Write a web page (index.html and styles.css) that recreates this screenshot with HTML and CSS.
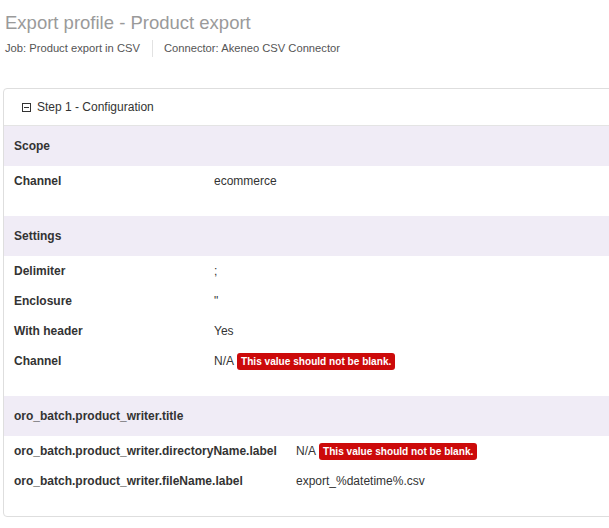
FILE: index.html
```html
<!DOCTYPE html>
<html lang="en">
<head>
<meta charset="utf-8">
<title>Export profile - Product export</title>
<link rel="stylesheet" href="styles.css">
</head>
<body>
<div class="page">
  <h1 class="title">Export profile - Product export</h1>
  <div class="meta">
    <span>Job: Product export in CSV</span>
    <span class="sep"></span>
    <span>Connector: Akeneo CSV Connector</span>
  </div>
  <div class="panel">
    <div class="panel-head">
      <svg class="toggle" width="9" height="9" viewBox="0 0 9 9"><rect x="0.5" y="0.5" width="8" height="8" fill="none" stroke="#333" stroke-width="1"/><line x1="2" y1="4.5" x2="7" y2="4.5" stroke="#333" stroke-width="1"/></svg>
      <span>Step 1 - Configuration</span>
    </div>

    <section class="group">
      <div class="group-title">Scope</div>
      <div class="rows">
        <div class="label">Channel</div><div class="value">ecommerce</div>
      </div>
    </section>

    <section class="group">
      <div class="group-title">Settings</div>
      <div class="rows">
        <div class="label">Delimiter</div><div class="value">;</div>
        <div class="label">Enclosure</div><div class="value">"</div>
        <div class="label">With header</div><div class="value">Yes</div>
        <div class="label">Channel</div><div class="value">N/A <span class="error">This value should not be blank.</span></div>
      </div>
    </section>

    <section class="group">
      <div class="group-title">oro_batch.product_writer.title</div>
      <div class="rows rows-wide">
        <div class="label">oro_batch.product_writer.directoryName.label</div><div class="value">N/A <span class="error">This value should not be blank.</span></div>
        <div class="label">oro_batch.product_writer.fileName.label</div><div class="value">export_%datetime%.csv</div>
      </div>
    </section>
  </div>
</div>
</body>
</html>
```

FILE: styles.css
```css
html, body {
  margin: 0;
  padding: 0;
  background: #fff;
  overflow: hidden;
}

body {
  font-family: "Liberation Sans", Arial, Helvetica, sans-serif;
  color: #333;
  font-size: 12px;
}

.page {
  padding: 0 0 0 3px;
  overflow: hidden;
}

.title {
  margin: 11px 0 0 2px;
  font-size: 18.5px;
  line-height: 24px;
  font-weight: normal;
  color: #9a9a9a;
}

.meta {
  margin: 3px 0 0 2px;
  display: flex;
  align-items: center;
  height: 20px;
  font-size: 11.2px;
  color: #555;
}

.sep {
  width: 1px;
  height: 17px;
  background: #e2e2e2;
  margin: 0 11px 0 12px;
}

.panel {
  margin-top: 30px;
  margin-right: -12px;
  border: 1px solid #dedede;
  border-radius: 4px;
  overflow: hidden;
}

.panel-head {
  height: 36px;
  display: flex;
  align-items: center;
  gap: 6px;
  padding-left: 18px;
  border-bottom: 1px solid #e4e4e4;
  font-size: 12px;
  color: #333;
}

.toggle {
  display: block;
  margin-top: 1px;
}

.group {
  padding-bottom: 20px;
}

.group-title {
  height: 40px;
  display: flex;
  align-items: center;
  padding-left: 10px;
  background: #f0ecf6;
  font-weight: bold;
  font-size: 12px;
  color: #333;
}

.rows {
  display: grid;
  grid-template-columns: 200px 1fr;
  grid-auto-rows: 30px;
  padding-left: 10px;
  align-items: center;
}

.rows-wide {
  grid-template-columns: 282px 1fr;
}

.label {
  font-weight: bold;
  color: #333;
}

.value {
  color: #333;
  display: flex;
  align-items: center;
  gap: 3px;
}

.error {
  display: inline-block;
  background: #cc0a0a;
  color: #fff;
  font-weight: bold;
  font-size: 10.1px;
  line-height: 17px;
  padding: 0 4px;
  border-radius: 3px;
}
```
